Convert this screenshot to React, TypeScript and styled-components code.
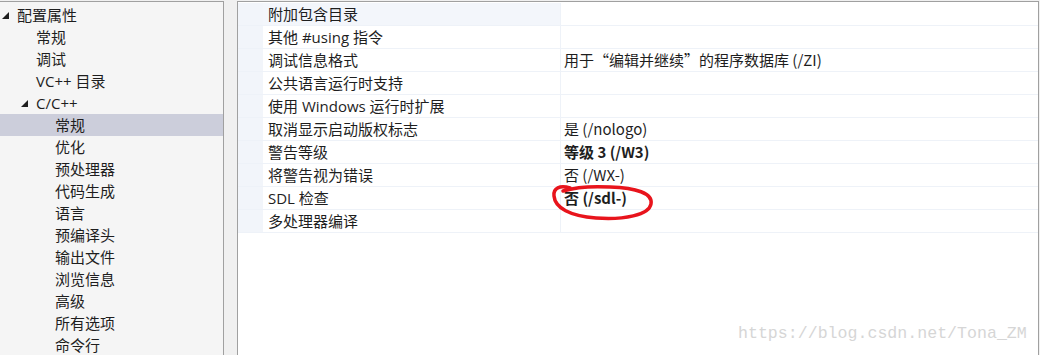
import React from "react";
import styled, { createGlobalStyle } from "styled-components";

const GlobalStyle = createGlobalStyle`
  html, body {
    margin: 0;
    padding: 0;
    background: #f0f0f0;
  }
  body {
    font-family: "Open Sans", "Noto Sans CJK SC", sans-serif;
    color: #1e1e1e;
  }
`;

const Page = styled.div`
  position: relative;
  display: flex;
  align-items: flex-start;
  gap: 13px;
  height: 355px;
  padding-top: 1px;
  box-sizing: border-box;
  overflow: hidden;
`;

const TreePanel = styled.div`
  width: 224px;
  height: 360px;
  box-sizing: border-box;
  background: #f5f5f5;
  border-top: 1px solid #a0a0a0;
  border-right: 1px solid #a0a0a0;
  padding-top: 2px;
`;

const TreeItem = styled.div<{ $level: number; $selected?: boolean }>`
  display: flex;
  align-items: center;
  height: 22px;
  padding-left: ${(p) => 2 + p.$level * 19}px;
  font-size: 15px;
  line-height: 22px;
  white-space: nowrap;
  background: ${(p) => (p.$selected ? "#cccedb" : "transparent")};
`;

const Toggle = styled.span`
  display: inline-block;
  width: 0;
  height: 0;
  margin-right: 8px;
  border-left: 7px solid transparent;
  border-bottom: 7px solid #1e1e1e;
`;

const Spacer = styled.span`
  display: inline-block;
  width: 15px;
`;

const GridPanel = styled.div`
  width: 802px;
  height: 360px;
  box-sizing: border-box;
  background: #ffffff;
  border: 1px solid #a0a0a0;
  border-bottom: none;
  padding-top: 1px;
`;

const Row = styled.div`
  display: grid;
  grid-template-columns: 25px 298px 1fr;
  height: 23px;
  box-sizing: border-box;
  border-bottom: 1px solid #eef2f8;
`;

const Gutter = styled.div`
  background: #f2f5fa;
`;

const NameCell = styled.div<{ $active?: boolean }>`
  padding-left: 5px;
  font-size: 15px;
  line-height: 22px;
  white-space: nowrap;
  background: ${(p) => (p.$active ? "#f3f6fb" : "transparent")};
  border-right: 1px solid #eef2f8;
`;

const ValueCell = styled.div<{ $bold?: boolean }>`
  padding-left: 3px;
  font-family: "Noto Sans CJK SC", "Open Sans", sans-serif;
  font-size: 15px;
  line-height: 22px;
  white-space: nowrap;
  font-weight: ${(p) => (p.$bold ? 700 : 400)};
`;

const Circle = styled.svg`
  position: absolute;
  left: 548px;
  top: 182px;
`;

const Watermark = styled.div`
  position: absolute;
  left: 738px;
  top: 324px;
  font-family: "Liberation Mono", monospace;
  font-size: 16.6px;
  color: #d6d6d6;
  white-space: nowrap;
`;

type TreeNode = { label: string; level: number; open?: boolean; selected?: boolean };

const tree: TreeNode[] = [
  { label: "配置属性", level: 0, open: true },
  { label: "常规", level: 1 },
  { label: "调试", level: 1 },
  { label: "VC++ 目录", level: 1 },
  { label: "C/C++", level: 1, open: true },
  { label: "常规", level: 2, selected: true },
  { label: "优化", level: 2 },
  { label: "预处理器", level: 2 },
  { label: "代码生成", level: 2 },
  { label: "语言", level: 2 },
  { label: "预编译头", level: 2 },
  { label: "输出文件", level: 2 },
  { label: "浏览信息", level: 2 },
  { label: "高级", level: 2 },
  { label: "所有选项", level: 2 },
  { label: "命令行", level: 2 },
];

type Prop = { name: string; value?: string; bold?: boolean };

const props: Prop[] = [
  { name: "附加包含目录" },
  { name: "其他 #using 指令" },
  { name: "调试信息格式", value: "用于“编辑并继续”的程序数据库 (/ZI)" },
  { name: "公共语言运行时支持" },
  { name: "使用 Windows 运行时扩展" },
  { name: "取消显示启动版权标志", value: "是 (/nologo)" },
  { name: "警告等级", value: "等级 3 (/W3)", bold: true },
  { name: "将警告视为错误", value: "否 (/WX-)" },
  { name: "SDL 检查", value: "否 (/sdl-)", bold: true },
  { name: "多处理器编译" },
];

export default function App() {
  return (
    <Page>
      <GlobalStyle />
      <TreePanel>
        {tree.map((n, i) => (
          <TreeItem key={i} $level={n.level} $selected={n.selected}>
            {n.open ? <Toggle /> : <Spacer />}
            {n.label}
          </TreeItem>
        ))}
      </TreePanel>
      <GridPanel>
        {props.map((p, i) => (
          <Row key={i}>
            <Gutter />
            <NameCell $active={i === 0}>{p.name}</NameCell>
            <ValueCell $bold={p.bold}>{p.value}</ValueCell>
          </Row>
        ))}
      </GridPanel>
      <Circle width="112" height="42" viewBox="0 0 112 42">
        <path
          d="M22 6 C12 3 5 6 6 14 C7 26 22 34 48 36 C76 38 101 33 103 22 C105 11 88 6 62 5 C44 4 28 5 15 9"
          fill="none"
          stroke="#e8141c"
          strokeWidth="3.5"
          strokeLinecap="round"
        />
      </Circle>
      <Watermark>https://blog.csdn.net/Tona_ZM</Watermark>
    </Page>
  );
}
